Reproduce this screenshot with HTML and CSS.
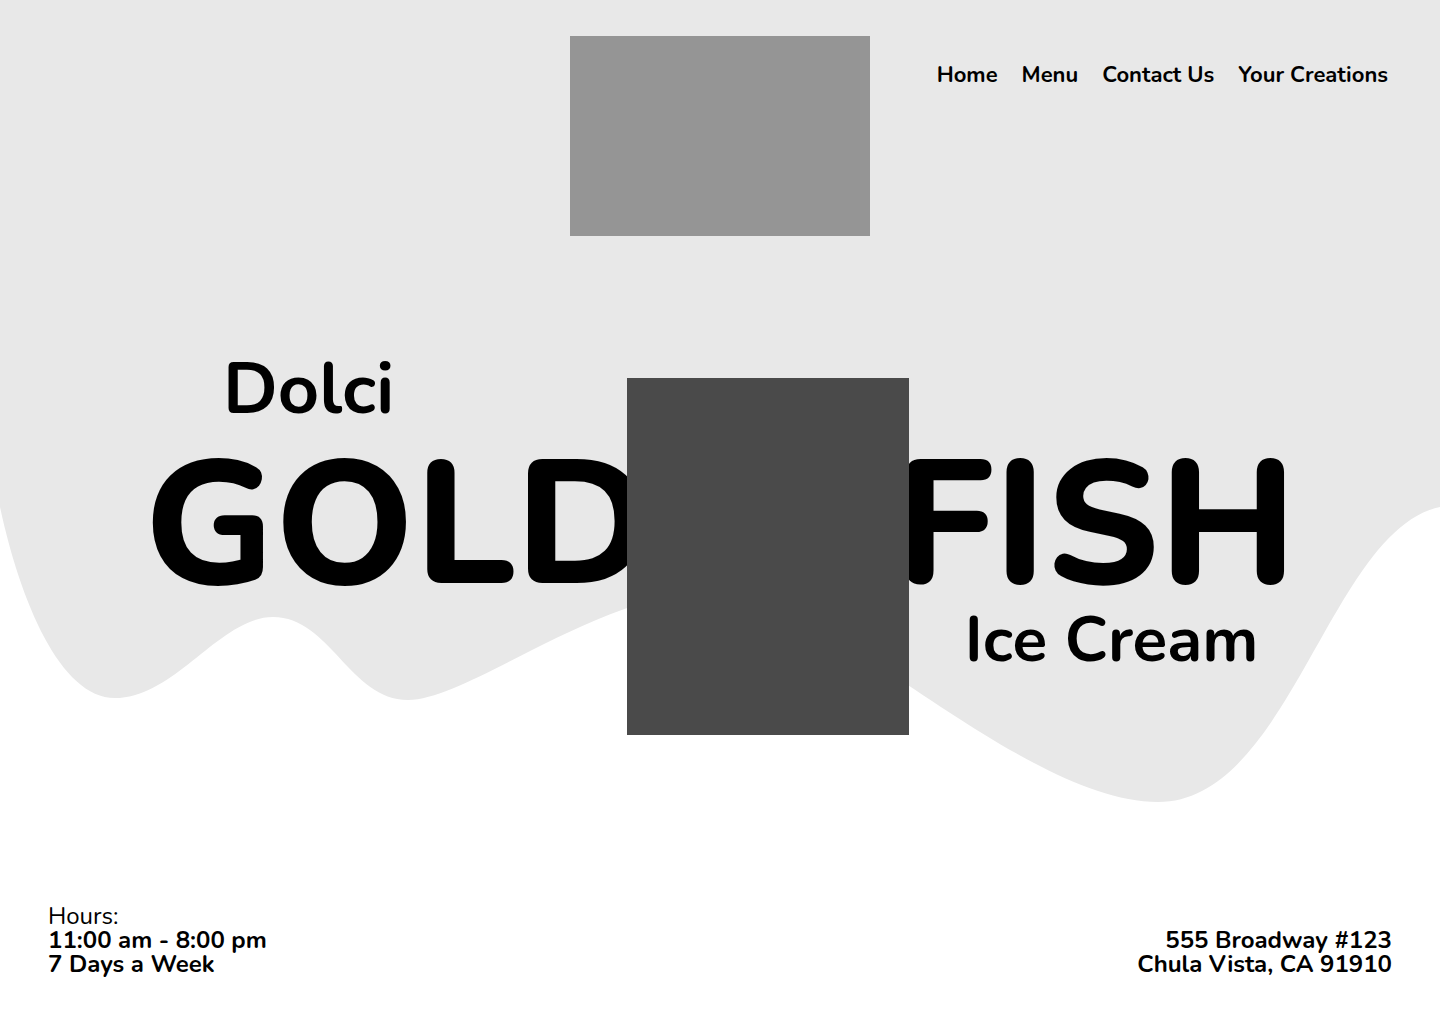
FILE: index.html
```html
<!DOCTYPE html>
<html lang="en">
<head>
<meta charset="utf-8">
<title>Dolci Goldfish Ice Cream</title>
<link rel="stylesheet" href="styles.css">
</head>
<body>
<div class="page">
  <svg class="backdrop" viewBox="0 0 1440 820" width="1440" height="820" aria-hidden="true">
    <path d="M0 0 H1440 V507 C1330 530 1290 802 1158 802 C1020 802 820 590 720 590 C600 590 470 700 408 700 C350 700 330 617 273 617 C220 617 175 698 115 698 C60 698 20 600 0 507 Z" fill="#e8e8e8"/>
  </svg>
  <header class="header">
    <div class="header-side"></div>
    <div class="logo-box"></div>
    <nav class="nav">
      <a href="#">Home</a>
      <a href="#">Menu</a>
      <a href="#">Contact Us</a>
      <a href="#">Your Creations</a>
    </nav>
  </header>
  <main class="hero">
    <div class="hero-left">
      <div class="dolci">Dolci</div>
      <div class="big">GOLD</div>
    </div>
    <div class="hero-image"></div>
    <div class="hero-right">
      <div class="big">FISH</div>
      <div class="icecream">Ice Cream</div>
    </div>
  </main>
  <footer class="footer">
    <div class="hours">
      <div class="light">Hours:</div>
      <div>11:00 am - 8:00 pm</div>
      <div>7 Days a Week</div>
    </div>
    <div class="address">
      <div>555 Broadway #123</div>
      <div>Chula Vista, CA 91910</div>
    </div>
  </footer>
</div>
</body>
</html>
```

FILE: styles.css
```css
* { box-sizing: border-box; }
html, body { margin: 0; padding: 0; background: #ffffff; }
body {
  font-family: "Nunito", "Open Sans", sans-serif;
  color: #000;
}
.page {
  position: relative;
  width: 1440px;
  min-height: 1024px;
  display: flex;
  flex-direction: column;
  overflow: hidden;
}
.backdrop {
  position: absolute;
  top: 0;
  left: 0;
  z-index: 0;
}
.header, .hero, .footer { position: relative; z-index: 1; }

.header {
  display: grid;
  grid-template-columns: 1fr 300px 1fr;
  padding: 36px 52px 0 52px;
}
.logo-box {
  width: 300px;
  height: 200px;
  background: #959595;
}
.nav {
  display: flex;
  justify-content: flex-end;
  align-items: flex-start;
  gap: 24px;
  margin-top: 28px;
}
.nav a {
  color: #000;
  text-decoration: none;
  font-weight: 700;
  font-size: 22px;
  line-height: 1;
}

.hero {
  display: flex;
  align-items: flex-start;
  margin-top: 117px;
  padding-left: 144px;
}
.hero-left { display: flex; flex-direction: column; }
.dolci {
  font-size: 72px;
  font-weight: 700;
  line-height: 1;
  margin-left: 79px;
  margin-bottom: 12px;
}
.big {
  font-size: 176px;
  font-weight: 800;
  line-height: 1;
}
.hero-image {
  position: relative;
  z-index: 2;
  flex: none;
  width: 282px;
  height: 357px;
  background: #4a4a4a;
  margin-top: 25px;
  margin-left: -25px;
}
.hero-right {
  display: flex;
  flex-direction: column;
  margin-top: 84px;
  margin-left: -15px;
}
.icecream {
  font-size: 64px;
  font-weight: 700;
  line-height: 1;
  margin-top: -5px;
  margin-left: 71px;
}

.footer {
  margin-top: auto;
  display: flex;
  justify-content: space-between;
  align-items: flex-end;
  padding: 0 48px 48px 48px;
  font-size: 24px;
  line-height: 24px;
  font-weight: 700;
}
.light { font-weight: 400; }
.address { text-align: right; }
```
